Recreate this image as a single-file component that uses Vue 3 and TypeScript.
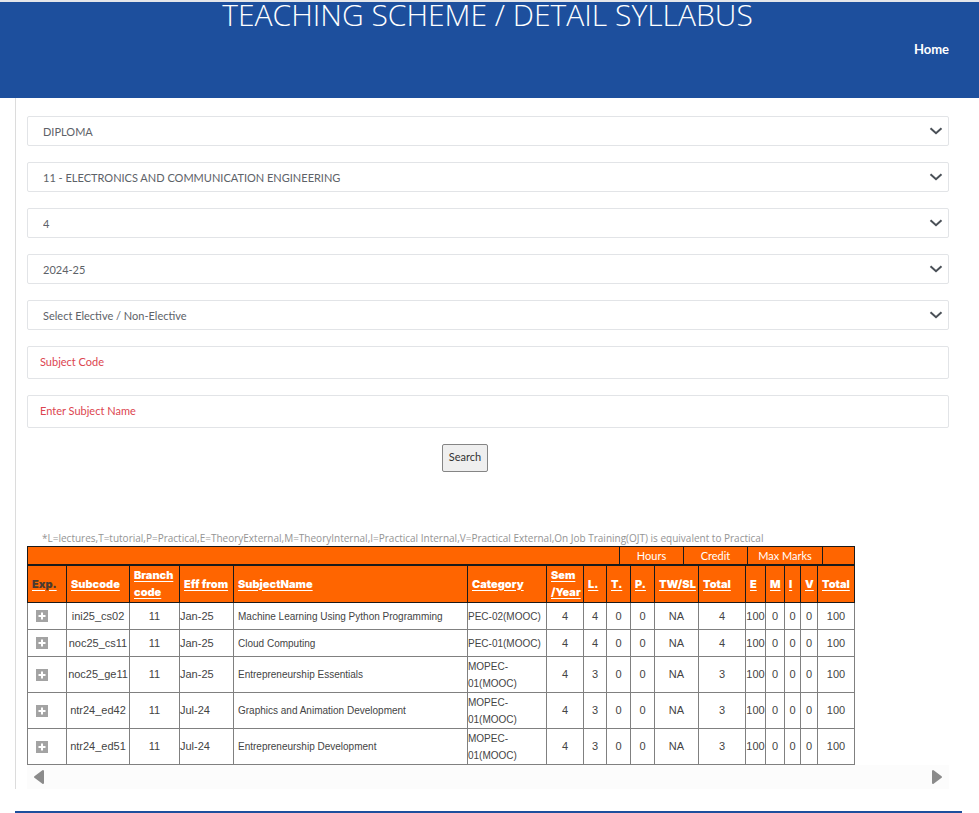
<script setup lang="ts">
import { ref } from 'vue'

interface Filter {
  id: string
  label: string
  value: string
}

interface Column {
  key: string
  title: string
}

interface Subject {
  code: string
  branch: string
  from: string
  name: string
  category: string
  sem: string
  marks: string[]
}

const filters = ref<Filter[]>([
  { id: 'course', label: 'Course', value: 'DIPLOMA' },
  { id: 'branch', label: 'Branch', value: '11 - ELECTRONICS AND COMMUNICATION ENGINEERING' },
  { id: 'semester', label: 'Semester', value: '4' },
  { id: 'year', label: 'Academic year', value: '2024-25' },
  { id: 'elective', label: 'Elective', value: 'Select Elective / Non-Elective' },
])

const subjectCode = ref('')
const subjectName = ref('')

const columns: Column[] = [
  { key: 'exp', title: 'Exp.' },
  { key: 'code', title: 'Subcode' },
  { key: 'branch', title: 'Branch code' },
  { key: 'from', title: 'Eff from' },
  { key: 'name', title: 'SubjectName' },
  { key: 'category', title: 'Category' },
  { key: 'sem', title: 'Sem /Year' },
  { key: 'l', title: 'L.' },
  { key: 't', title: 'T.' },
  { key: 'p', title: 'P.' },
  { key: 'tw', title: 'TW/SL' },
  { key: 'credit', title: 'Total' },
  { key: 'e', title: 'E' },
  { key: 'm', title: 'M' },
  { key: 'i', title: 'I' },
  { key: 'v', title: 'V' },
  { key: 'total', title: 'Total' },
]

const subjects: Subject[] = [
  { code: 'ini25_cs02', branch: '11', from: 'Jan-25', name: 'Machine Learning Using Python Programming', category: 'PEC-02(MOOC)', sem: '4', marks: ['4', '0', '0', 'NA', '4', '100', '0', '0', '0', '100'] },
  { code: 'noc25_cs11', branch: '11', from: 'Jan-25', name: 'Cloud Computing', category: 'PEC-01(MOOC)', sem: '4', marks: ['4', '0', '0', 'NA', '4', '100', '0', '0', '0', '100'] },
  { code: 'noc25_ge11', branch: '11', from: 'Jan-25', name: 'Entrepreneurship Essentials', category: 'MOPEC-01(MOOC)', sem: '4', marks: ['3', '0', '0', 'NA', '3', '100', '0', '0', '0', '100'] },
  { code: 'ntr24_ed42', branch: '11', from: 'Jul-24', name: 'Graphics and Animation Development', category: 'MOPEC-01(MOOC)', sem: '4', marks: ['3', '0', '0', 'NA', '3', '100', '0', '0', '0', '100'] },
  { code: 'ntr24_ed51', branch: '11', from: 'Jul-24', name: 'Entrepreneurship Development', category: 'MOPEC-01(MOOC)', sem: '4', marks: ['3', '0', '0', 'NA', '3', '100', '0', '0', '0', '100'] },
]
</script>

<template>
  <div class="page">
    <header class="banner">
      <h1>TEACHING SCHEME / DETAIL SYLLABUS</h1>
      <nav><a href="#">Home</a></nav>
    </header>

    <main class="panel">
      <form class="search" @submit.prevent>
        <div v-for="f in filters" :key="f.id" class="picker">
          <select :id="f.id" v-model="f.value" :aria-label="f.label">
            <option :value="f.value">{{ f.value }}</option>
          </select>
          <svg class="chevron" viewBox="0 0 14 8" aria-hidden="true">
            <path d="M1.5 1.2 L7 6.2 L12.5 1.2" />
          </svg>
        </div>
        <input v-model="subjectCode" type="text" placeholder="Subject Code" aria-label="Subject Code" />
        <input v-model="subjectName" type="text" placeholder="Enter Subject Name" aria-label="Enter Subject Name" />
        <button type="submit" class="submit">Search</button>
      </form>

      <p class="legend">*L=lectures,T=tutorial,P=Practical,E=TheoryExternal,M=TheoryInternal,I=Practical Internal,V=Practical External,On Job Training(OJT) is equivalent to Practical</p>

      <section class="scheme">
        <table class="groups">
          <colgroup>
            <col />
            <col class="g-hours" />
            <col class="g-credit" />
            <col class="g-marks" />
            <col class="g-rest" />
          </colgroup>
          <tbody>
            <tr>
              <td></td>
              <td>Hours</td>
              <td>Credit</td>
              <td>Max Marks</td>
              <td></td>
            </tr>
          </tbody>
        </table>
        <table class="subjects">
          <colgroup>
            <col v-for="c in columns" :key="c.key" :class="'c-' + c.key" />
          </colgroup>
          <thead>
            <tr>
              <th v-for="c in columns" :key="c.key" scope="col">
                <span v-if="c.key === 'exp'" class="plain">{{ c.title }}</span>
                <a v-else href="#">{{ c.title }}</a>
              </th>
            </tr>
          </thead>
          <tbody>
            <tr v-for="s in subjects" :key="s.code">
              <td>
                <button type="button" class="expand" :aria-label="'Expand ' + s.code">
                  <svg viewBox="0 0 12 12" aria-hidden="true">
                    <rect width="12" height="12" fill="#a3a3a3" />
                    <path d="M6 2.5v7M2.5 6h7" stroke="#fff" stroke-width="2" />
                  </svg>
                </button>
              </td>
              <td>{{ s.code }}</td>
              <td>{{ s.branch }}</td>
              <td class="from">{{ s.from }}</td>
              <td class="name">{{ s.name }}</td>
              <td class="category">{{ s.category }}</td>
              <td>{{ s.sem }}</td>
              <td v-for="(m, i) in s.marks" :key="i">{{ m }}</td>
            </tr>
          </tbody>
        </table>
      </section>

      <div class="scroller">
        <button type="button" aria-label="Scroll left">
          <svg viewBox="0 0 12 16" aria-hidden="true"><path d="M10 2v12L2 8z" /></svg>
        </button>
        <button type="button" aria-label="Scroll right">
          <svg viewBox="0 0 12 16" aria-hidden="true"><path d="M2 2v12l8-6z" /></svg>
        </button>
      </div>
    </main>
    <hr class="rule" />
  </div>
</template>

<style>
body {
  background: #fff;
}
</style>

<style scoped>
.page {
  font-family: Lato, "Open Sans", sans-serif;
  color: #444;
}

.page *,
.page {
  box-sizing: border-box;
}

.banner {
  height: 98px;
  padding: 0 30px 0 26px;
  border-top: 2px solid #e4e6ea;
  background: #1d4f9d;
  color: #fff;
}

h1 {
  margin: 0;
  font-family: "Open Sans", sans-serif;
  font-size: 30px;
  font-weight: 300;
  line-height: 26px;
  text-align: center;
}

nav {
  margin-top: 11px;
  text-align: right;
  line-height: 18px;
}

nav a {
  color: #fff;
  font-size: 13px;
  font-weight: 700;
  text-decoration: none;
}

.panel {
  margin-left: 15px;
  padding: 18px 30px 0 11px;
  border-left: 1px solid #dcdcdc;
}

.search {
  display: flex;
  flex-direction: column;
  gap: 16px;
}

.picker {
  position: relative;
}

select,
input {
  display: block;
  width: 100%;
  border: 1px solid #e2e4e7;
  border-radius: 2px;
  background: #fff;
  font-family: inherit;
  font-size: 11px;
}

select {
  height: 30px;
  padding: 0 32px 0 15px;
  appearance: none;
  color: #5d6268;
}

input {
  height: 33px;
  padding: 0 12px 2px;
}

input::placeholder {
  color: #dc4550;
  opacity: 1;
}

.chevron {
  position: absolute;
  top: 11px;
  right: 6px;
  width: 14px;
  height: 8px;
  fill: none;
  stroke: #4a5057;
  stroke-width: 2;
  pointer-events: none;
}

.submit {
  width: 46px;
  height: 28px;
  margin-left: 415px;
  padding: 0 0 4px;
  border: 1px solid #858585;
  border-radius: 2px;
  background: #efefef;
  color: #333;
  font-family: inherit;
  font-size: 11px;
}

.legend {
  margin: 58px 0 0 15px;
  color: #949494;
  font-family: "Open Sans", sans-serif;
  font-size: 10px;
  line-height: 16px;
}

.scheme {
  overflow-x: auto;
}

table {
  width: 828px;
  border-collapse: collapse;
  table-layout: fixed;
}

.groups td {
  height: 18px;
  padding: 0;
  border: 1px solid #1a1a1a;
  background: #ff6500;
  color: #fff;
  font-size: 11px;
  line-height: 16px;
  text-align: center;
}

.g-hours,
.g-credit {
  width: 64px;
}

.g-marks {
  width: 75px;
}

.g-rest {
  width: 32px;
}

.subjects th {
  height: 37px;
  padding: 0 0 0 4px;
  border: 1px solid #1a1a1a;
  background: #ff6500;
  color: #fff;
  font-family: Inter, sans-serif;
  font-size: 11px;
  font-weight: 900;
  line-height: 17px;
  text-align: left;
}

.subjects th a {
  color: #fff;
  text-decoration: underline;
  text-underline-offset: 2px;
}

.plain {
  color: #4a3a30;
  text-decoration: underline;
  text-decoration-color: #fff;
  text-underline-offset: 2px;
}

.subjects td {
  height: 27px;
  padding: 0;
  border: 1px solid #808080;
  font-family: "Liberation Sans", Arial, sans-serif;
  font-size: 11px;
  line-height: 17px;
  text-align: center;
}

.subjects td.from {
  text-align: left;
}

.subjects td.name {
  padding-left: 4px;
  font-size: 10px;
  text-align: left;
}

.subjects td.category {
  padding-top: 1px;
  font-size: 10px;
  text-align: left;
}

.c-exp { width: 39px; }
.c-code { width: 63px; }
.c-branch { width: 50px; }
.c-from { width: 54px; }
.c-category { width: 79px; }
.c-sem { width: 37px; }
.c-l { width: 23px; }
.c-t,
.c-p { width: 24px; }
.c-tw { width: 44px; }
.c-credit { width: 47px; }
.c-e { width: 20px; }
.c-m { width: 19px; }
.c-i { width: 16px; }
.c-v { width: 17px; }
.c-total { width: 37px; }

.expand {
  display: flex;
  width: 12px;
  height: 12px;
  margin: 0 8px;
  padding: 0;
  border: 0;
  background: none;
}

.expand svg {
  width: 12px;
  height: 12px;
}

.scroller {
  display: flex;
  align-items: center;
  justify-content: space-between;
  height: 24px;
  padding: 0 6px;
  background: #fcfcfc;
}

.scroller button {
  display: flex;
  padding: 0;
  border: 0;
  background: none;
}

.scroller svg {
  width: 12px;
  height: 16px;
  fill: #8b8b8b;
  stroke: #8b8b8b;
  stroke-width: 2;
  stroke-linejoin: round;
}

.rule {
  height: 2px;
  margin: 22px 17px 0 15px;
  border: 0;
  background: #1d4f9d;
}
</style>
